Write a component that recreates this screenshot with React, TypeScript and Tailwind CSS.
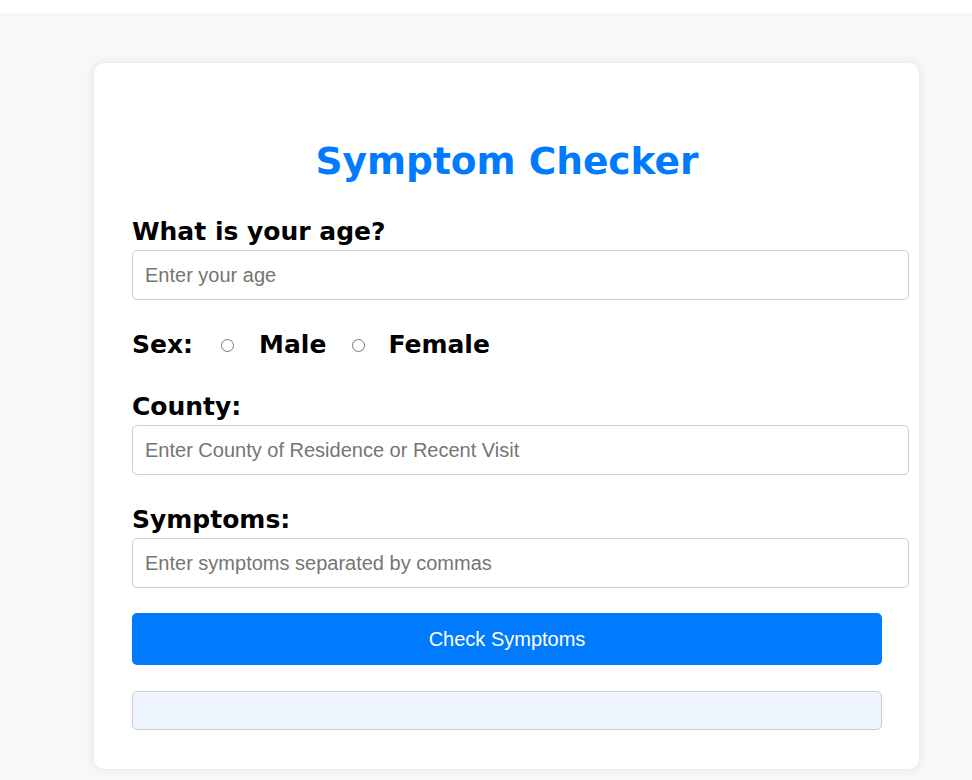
import React from 'react';

const labelCls = "block font-['DejaVu_Sans',sans-serif] font-bold text-[25px] leading-[28px] text-black";
const inputCls =
  "block w-[777px] h-[50px] px-3 border border-[#cccccc] rounded-[5px] bg-white font-['Liberation_Sans',Arial,sans-serif] text-[20px] text-black placeholder:text-[#757575] outline-none";

const App: React.FC = () => {
  return (
    <div className="min-h-screen bg-white">
      <div className="mt-[13px] min-h-[767px] bg-[#f8f8f8] pt-[50px] pb-[20px]">
        {/* Card */}
        <div className="ml-[94px] w-[825px] bg-white rounded-[10px] shadow-[0_0_10px_rgba(0,0,0,0.1)] pl-[38px] pr-[37px] pt-[76px] pb-[39px]">
          <h1 className="text-center font-['DejaVu_Sans',sans-serif] font-bold text-[37.5px] leading-[44px] text-[#007bff]">
            Symptom Checker
          </h1>

          <label className={`${labelCls} mt-[35px]`}>What is your age?</label>
          <input type="text" placeholder="Enter your age" className={`${inputCls} mt-[4px]`} />

          {/* Sex */}
          <div className="mt-[31px] flex items-center font-['DejaVu_Sans',sans-serif] font-bold text-[25px] leading-[28px] text-black">
            <span>Sex:</span>
            <input type="radio" name="sex" className="ml-[28px] w-[13px] h-[13px] m-0" />
            <span className="ml-[25px]">Male</span>
            <input type="radio" name="sex" className="ml-[26px] w-[13px] h-[13px] m-0" />
            <span className="ml-[23px]">Female</span>
          </div>

          <label className={`${labelCls} mt-[34px]`}>County:</label>
          <input
            type="text"
            placeholder="Enter County of Residence or Recent Visit"
            className={`${inputCls} mt-[4px]`}
          />

          <label className={`${labelCls} mt-[31px]`}>Symptoms:</label>
          <input
            type="text"
            placeholder="Enter symptoms separated by commas"
            className={`${inputCls} mt-[4px]`}
          />

          <button className="mt-[25px] w-full h-[52px] rounded-[5px] bg-[#007bff] text-white font-['Liberation_Sans',Arial,sans-serif] text-[20px]">
            Check Symptoms
          </button>

          {/* Result */}
          <div className="mt-[26px] h-[39px] w-full rounded-[5px] border border-[#cccccc] bg-[#eff6ff]"></div>
        </div>
      </div>
    </div>
  );
};

export default App;
